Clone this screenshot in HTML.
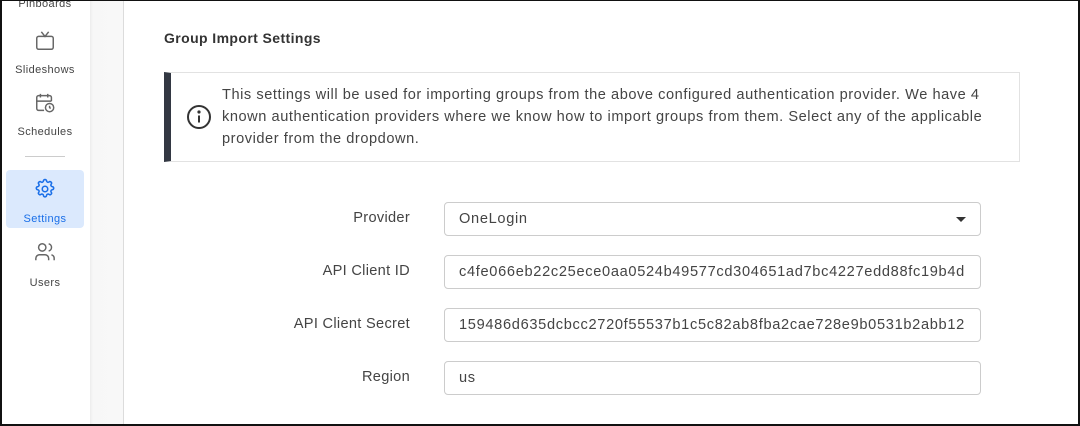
<!DOCTYPE html>
<html><head><meta charset="utf-8"><style>
*{box-sizing:border-box;margin:0;padding:0}
body{width:1080px;height:426px;overflow:hidden;font-family:"Liberation Sans",Roboto,sans-serif;background:#fff;position:relative}
.frame{position:absolute;inset:0;border:2px solid #111;border-top-width:1px;z-index:10;pointer-events:none}
.side{position:absolute;left:0;top:0;width:90px;height:426px;background:#fff}
.strip{position:absolute;left:90px;top:0;width:34px;height:426px;background:linear-gradient(90deg,#ececec,#f7f7f7 3px,#f8f8f8);border-right:1px solid #dcdcdc}
.item{position:absolute;left:6px;width:78px;text-align:center;font-size:11px;letter-spacing:0.4px;color:#444}
.item svg{display:block;margin:0 auto}
.sel{background:#dbe9fd;border-radius:4px;color:#1a6fe8}
h3{position:absolute;left:164px;top:30px;font-size:14px;font-weight:bold;color:#333;letter-spacing:0.4px}
.info{position:absolute;left:164px;top:72px;width:856px;height:90px;border:1px solid #e2e2e2;border-left:7px solid #333843;background:#fff}
.info p{position:absolute;left:51px;top:11px;width:775px;font-size:14.6px;line-height:22px;color:#444;letter-spacing:0.55px}
.lbl{position:absolute;right:670px;font-size:14.6px;color:#444;text-align:right;letter-spacing:0.3px}
.inp{position:absolute;left:444px;width:537px;height:34px;border:1px solid #ccc;border-radius:4px;padding-left:14px;font-size:14.6px;line-height:32px;color:#444;white-space:nowrap;overflow:hidden;letter-spacing:0.68px}
</style></head><body>
<div class="side">
<div class="item" style="top:-2px">Pinboards</div>
<div class="item" style="top:30px"><svg width="22" height="22" viewBox="0 0 24 24" fill="none" stroke="#666" stroke-width="1.6"><rect x="3" y="7" width="18" height="14" rx="2"/><path d="M8 2l4 5 4-5"/></svg><div style="margin-top:12px">Slideshows</div></div>
<div class="item" style="top:92px"><svg width="22" height="22" viewBox="0 0 24 24" fill="none" stroke="#666" stroke-width="1.6"><path d="M11 20H5a2 2 0 0 1-2-2V6a2 2 0 0 1 2-2h12a2 2 0 0 1 2 2v4M3 10h16M7 2v4M15 2v4"/><circle cx="17" cy="17" r="4.5"/><path d="M17 15v2l1.2 1"/></svg><div style="margin-top:12px">Schedules</div></div>
<div style="position:absolute;left:25px;top:156px;width:40px;border-top:1px solid #ccc"></div>
<div class="item sel" style="top:170px;height:58px;padding-top:8px"><svg width="22" height="22" viewBox="0 0 24 24" fill="none" stroke="#1a6fe8" stroke-width="1.7"><path d="M10.3 3.3a1.7 1.7 0 0 1 3.4 0 1.7 1.7 0 0 0 2.6 1.1 1.7 1.7 0 0 1 2.4 2.4 1.7 1.7 0 0 0 1.1 2.6 1.7 1.7 0 0 1 0 3.4 1.7 1.7 0 0 0-1.1 2.6 1.7 1.7 0 0 1-2.4 2.4 1.7 1.7 0 0 0-2.6 1.1 1.7 1.7 0 0 1-3.4 0 1.7 1.7 0 0 0-2.6-1.1 1.7 1.7 0 0 1-2.4-2.4 1.7 1.7 0 0 0-1.1-2.6 1.7 1.7 0 0 1 0-3.4 1.7 1.7 0 0 0 1.1-2.6 1.7 1.7 0 0 1 2.4-2.4 1.7 1.7 0 0 0 2.6-1.1z"/><circle cx="12" cy="12" r="3"/></svg><div style="margin-top:13px">Settings</div></div>
<div class="item" style="top:241px"><svg width="22" height="22" viewBox="0 0 24 24" fill="none" stroke="#666" stroke-width="1.6"><circle cx="9" cy="7" r="4"/><path d="M2 21v-2a4 4 0 0 1 4-4h6a4 4 0 0 1 4 4v2M16 3.1a4 4 0 0 1 0 7.8M22 21v-2a4 4 0 0 0-3-3.9"/></svg><div style="margin-top:14px">Users</div></div>
</div>
<div class="strip"></div>
<h3>Group Import Settings</h3>
<div class="info"><svg style="position:absolute;left:15px;top:31px" width="26" height="26" viewBox="0 0 26 26" fill="none" stroke="#333" stroke-width="2"><circle cx="13" cy="13" r="11"/><path d="M13 11.5v7"/><circle cx="13" cy="8" r="0.6" fill="#333"/></svg><p>This settings will be used for importing groups from the above configured authentication provider. We have 4 known authentication providers where we know how to import groups from them. Select any of the applicable provider from the dropdown.</p></div>
<div class="lbl" style="top:210px">Provider</div>
<div class="inp" style="top:202px">OneLogin<span style="position:absolute;right:14px;top:14px;border-left:5px solid transparent;border-right:5px solid transparent;border-top:5px solid #333"></span></div>
<div class="lbl" style="top:263px">API Client ID</div>
<div class="inp" style="top:255px">c4fe066eb22c25ece0aa0524b49577cd304651ad7bc4227edd88fc19b4d</div>
<div class="lbl" style="top:316px">API Client Secret</div>
<div class="inp" style="top:308px">159486d635dcbcc2720f55537b1c5c82ab8fba2cae728e9b0531b2abb12</div>
<div class="lbl" style="top:369px">Region</div>
<div class="inp" style="top:361px">us</div>
<div class="frame"></div>
</body></html>
